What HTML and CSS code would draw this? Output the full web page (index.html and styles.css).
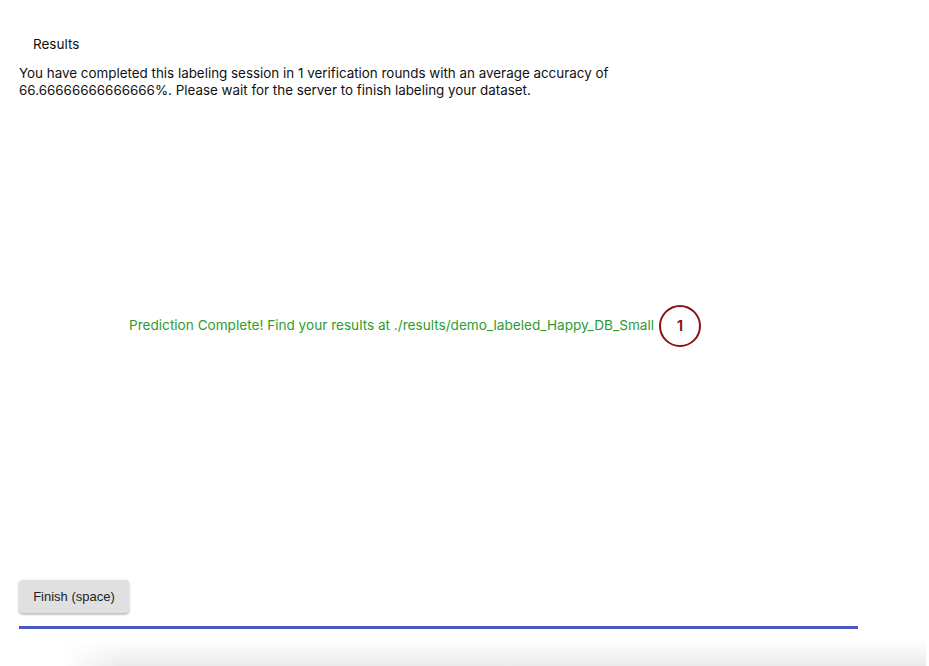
FILE: index.html
```html
<!DOCTYPE html>
<html lang="en">
<head>
<meta charset="utf-8">
<title>Results</title>
<link rel="stylesheet" href="styles.css">
</head>
<body>
<main class="page">
  <h2 class="title">Results</h2>
  <p class="summary">You have completed this labeling session in 1 verification rounds with an average accuracy of<br>66.66666666666666%. Please wait for the server to finish labeling your dataset.</p>
  <div class="status">
    <span class="status-text">Prediction Complete! Find your results at ./results/demo_labeled_Happy_DB_Small</span>
    <span class="marker">1</span>
  </div>
  <button class="finish" type="button">Finish (space)</button>
  <div class="progress"></div>
</main>
<div class="fade"></div>
</body>
</html>
```
FILE: styles.css
```css
html, body {
  margin: 0;
  padding: 0;
  background: #fff;
  height: 100%;
  overflow: hidden;
}
body {
  font-family: Inter, "Liberation Sans", Arial, sans-serif;
  color: #111;
  display: flex;
  flex-direction: column;
}
.page {
  padding: 36px 0 0 19px;
  width: 839px;
}
.title {
  margin: 0 0 0 14px;
  font-size: 13.5px;
  font-weight: 400;
  line-height: 17px;
}
.summary {
  margin: 12px 0 0 0;
  font-size: 13.4px;
  line-height: 17px;
}
.status {
  margin: 218px 0 0 110px;
  display: flex;
  align-items: center;
  height: 17px;
}
.status-text {
  color: #2f9b2f;
  font-size: 13.6px;
  line-height: 17px;
}
.marker {
  margin-left: 5px;
  width: 38px;
  height: 38px;
  border: 2px solid #8b1212;
  border-radius: 50%;
  color: #8b1212;
  font-weight: 700;
  font-size: 14px;
  display: flex;
  align-items: center;
  justify-content: center;
  flex: none;
}
.finish {
  display: block;
  margin-top: 246px;
  width: 110px;
  height: 33px;
  border: none;
  border-radius: 4px;
  background: #e0e0e0;
  box-shadow: 0 1px 3px rgba(0,0,0,0.25), 0 2px 2px rgba(0,0,0,0.1);
  font-family: "Liberation Sans", Arial, sans-serif;
  font-size: 13px;
  color: #222;
  padding: 0;
}
.progress {
  margin-top: 13px;
  height: 3px;
  background: #4a58c0;
}
.fade {
  margin: 11px 3px 0 60px;
  flex: 1;
  background: linear-gradient(to bottom, #fff, #ebebeb);
  -webkit-mask-image: linear-gradient(to right, transparent, #000 60px);
  mask-image: linear-gradient(to right, transparent, #000 60px);
}
```
